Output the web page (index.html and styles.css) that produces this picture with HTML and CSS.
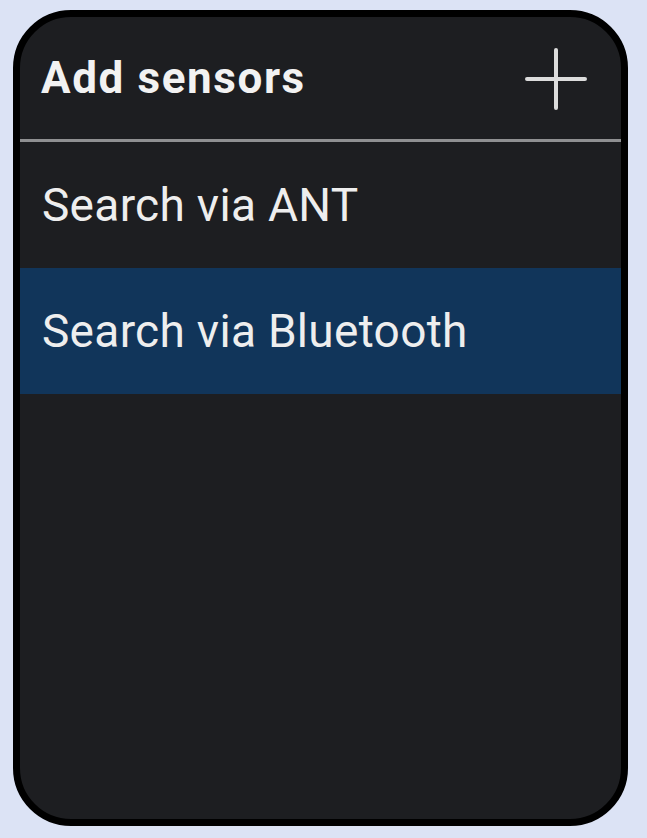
FILE: index.html
```html
<!DOCTYPE html>
<html lang="en">
<head>
<meta charset="utf-8">
<title>Add sensors</title>
<link rel="stylesheet" href="styles.css">
</head>
<body>
<div class="device">
  <header class="header">
    <h1 class="title">Add sensors</h1>
    <svg class="plus" width="62" height="62" viewBox="0 0 62 62" aria-hidden="true">
      <path d="M31 2 V60 M2 31 H60" stroke="#dcdcdc" stroke-width="4" stroke-linecap="round" fill="none"/>
    </svg>
  </header>
  <ul class="menu">
    <li class="item">Search via ANT</li>
    <li class="item selected">Search via Bluetooth</li>
  </ul>
</div>
</body>
</html>
```
FILE: styles.css
```css
html, body {
  margin: 0;
  padding: 0;
}
body {
  background: #dce3f5;
  width: 647px;
  height: 838px;
  padding: 10px 0 0 13px;
  box-sizing: border-box;
  font-family: Roboto, "Noto Sans", sans-serif;
}
.device {
  width: 615px;
  height: 816px;
  box-sizing: border-box;
  border: 7px solid #000;
  border-radius: 58px;
  background: #1d1e21;
  overflow: hidden;
  display: flex;
  flex-direction: column;
}
.header {
  height: 122px;
  flex: none;
  display: flex;
  align-items: center;
  justify-content: space-between;
  padding: 0 34px 0 21px;
  border-bottom: 3px solid #8f9092;
}
.title {
  margin: 0;
  color: #f2f2f2;
  font-size: 44px;
  font-weight: 700;
  letter-spacing: 1.6px;
}
.plus {
  display: block;
  margin-top: 2px;
}
.menu {
  list-style: none;
  margin: 0;
  padding: 0;
}
.item {
  height: 126px;
  display: flex;
  align-items: center;
  padding-left: 22px;
  color: #eeeeee;
  font-size: 46px;
  font-weight: 400;
  letter-spacing: 0.3px;
}
.item.selected {
  background: #11355a;
}
```
